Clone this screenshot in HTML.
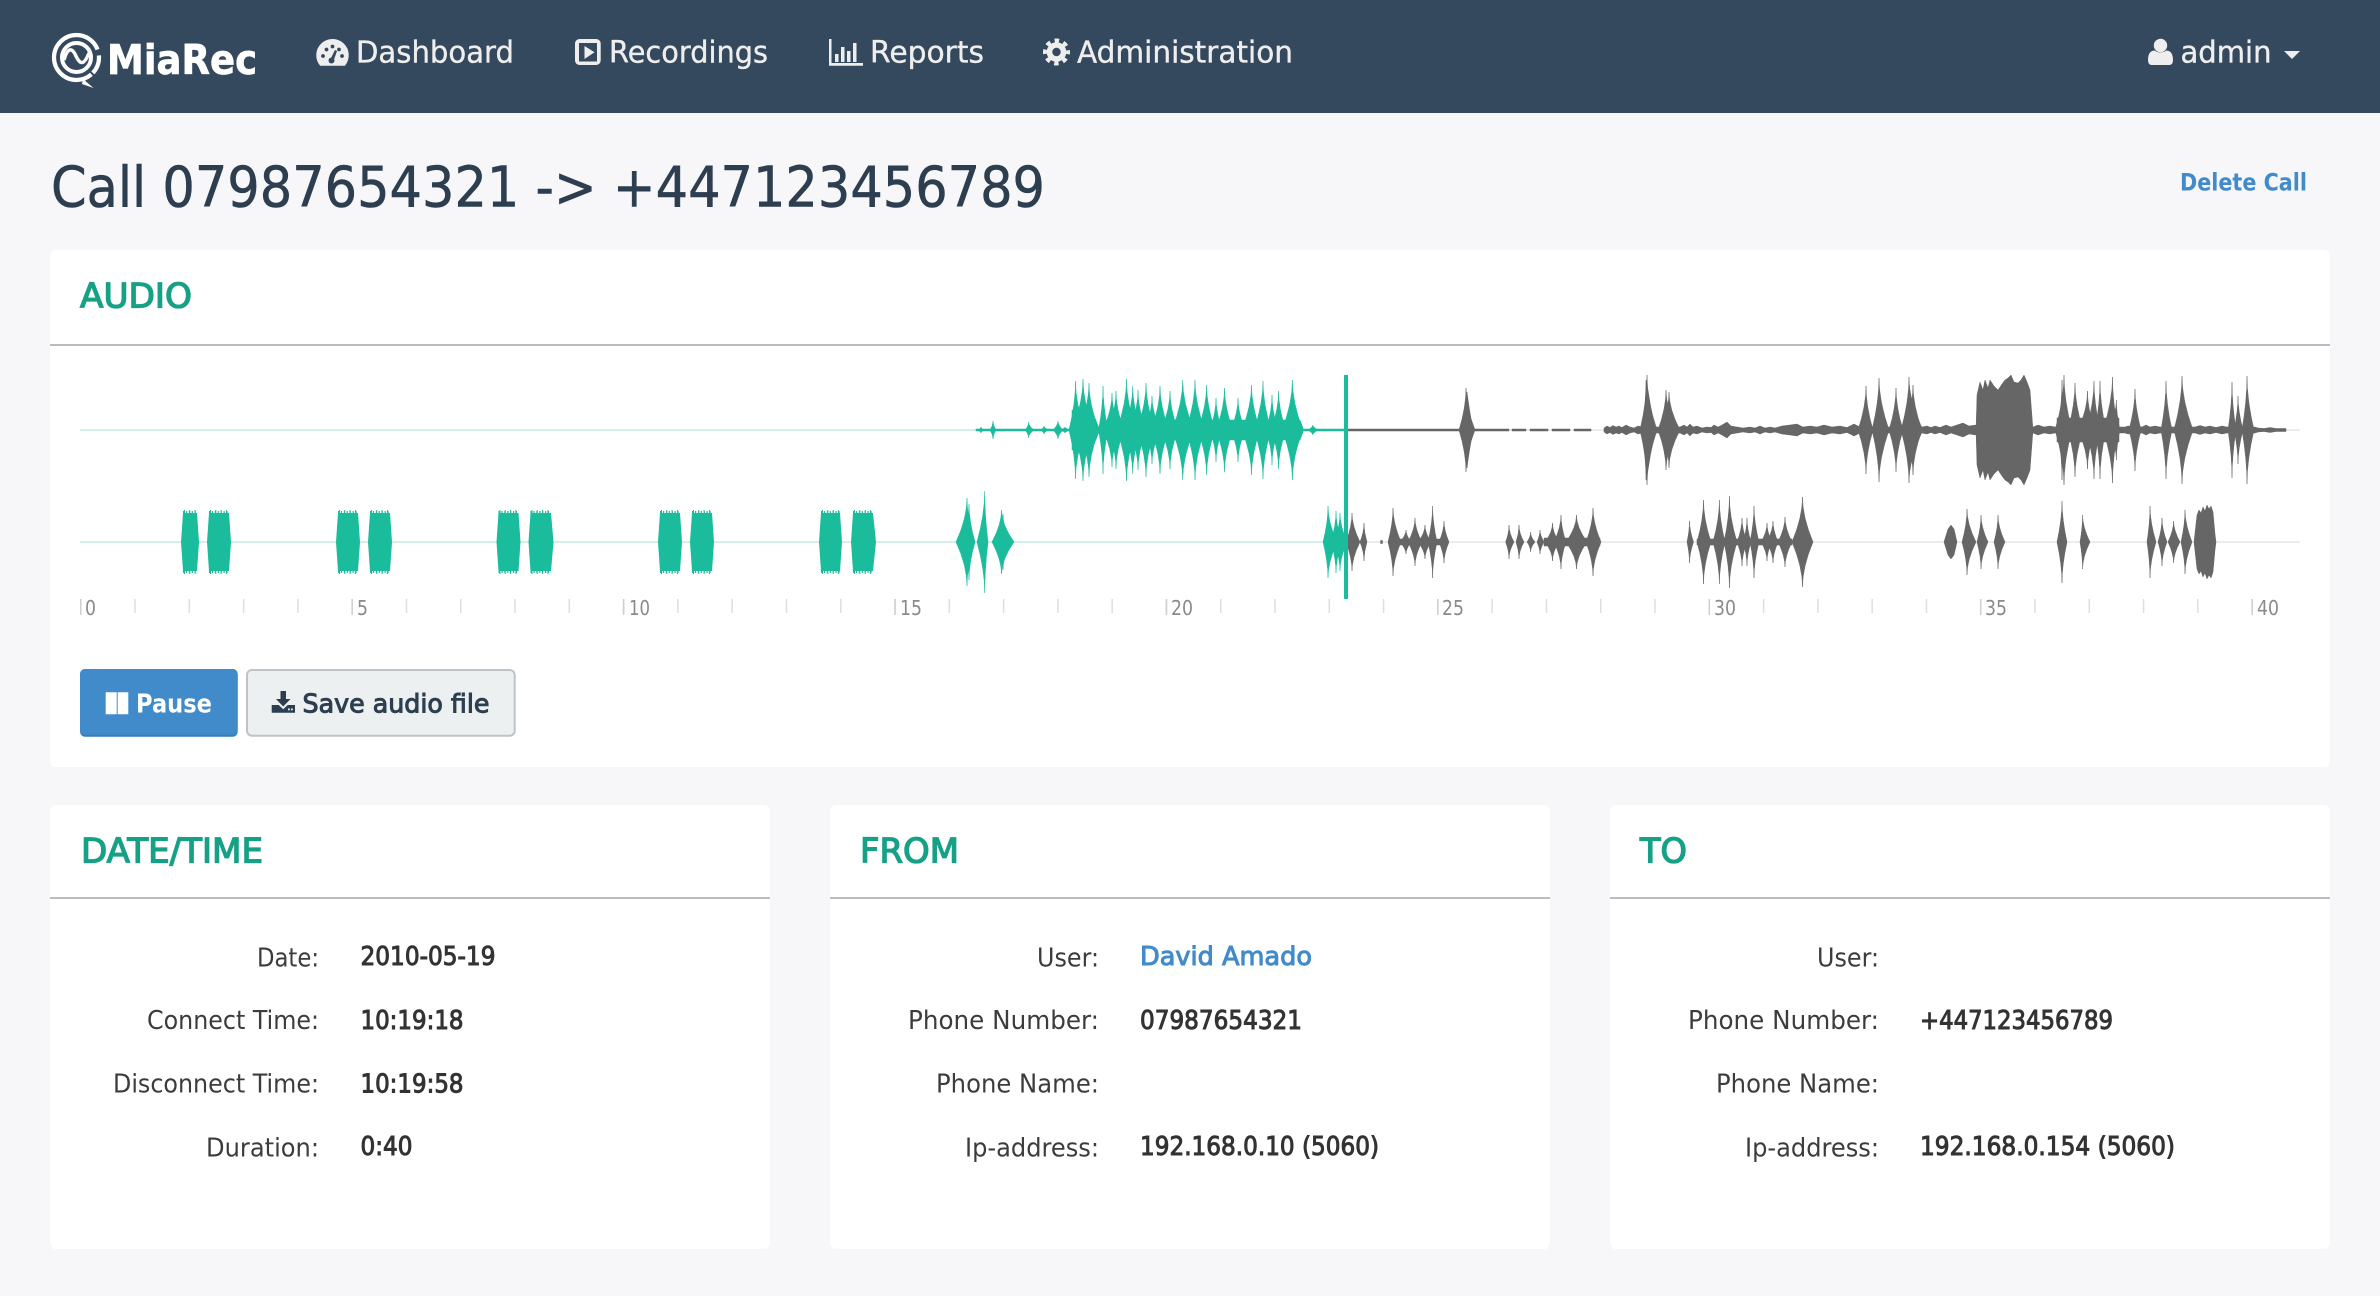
<!DOCTYPE html>
<html lang="en"><head><meta charset="utf-8"><title>Call 07987654321 -&gt; +447123456789</title>
<style>
html,body{margin:0;padding:0;background:#f7f7f9;width:2380px;height:1296px;overflow:hidden}
svg{display:block}
text{font-family:"DejaVu Sans","Liberation Sans",sans-serif}
.n{font-size:30px;fill:#eee;stroke:#eee;stroke-width:.35px}
.h{font-size:34px;fill:#16a085;stroke:#16a085;stroke-width:1.3px}
.l{font-size:25.5px;fill:#3c3c3c}
.v{font-size:25.5px;fill:#333;stroke:#333;stroke-width:1px}
.t{font-size:20px;fill:#8a8a8a}
</style></head><body>
<svg width="2380" height="1296" viewBox="0 0 2380 1296" xmlns="http://www.w3.org/2000/svg">
<defs>
<clipPath id="p"><rect x="0" y="360" width="1346" height="240"/></clipPath>
<clipPath id="q"><rect x="1346" y="360" width="1000" height="240"/></clipPath>
<path id="a" d="M976 0V-1H1509V0zM1512 0V-1H1526V0zM1530 0V-1H1548V0zM1552 0V-1H1570V0zM1574 0V-1H1591V0z
M978 0Q981 -1.600 981 -3Q981 -1.600 984 0zM990 0Q993 -5 993 -9Q993 -5 996 0zM1025 0Q1028.600 -4 1028.600 -8Q1028.600 -4 1034 0zM1040 0Q1044 -2 1044 -4Q1044 -2 1049 0zM1053 0Q1058 -5 1058 -9Q1058 -5 1063 0zM1060 0Q1065 -2 1065 -3Q1065 -2 1070 0z
M1072 0V-20L1095 -12 1099 -2 1107 -3 1112 -10 1300 -10 1303 -2V0z
M1069 0Q1075.500 -27 1075.500 -49Q1075.500 -27 1085 0zM1072 0Q1083 -28 1083 -51Q1083 -28 1094 0zM1079 0Q1089 -26 1089 -47Q1089 -26 1099 0zM1098.500 0Q1103 -24 1103 -44Q1103 -24 1108 0zM1103 0Q1112 -20 1112 -37Q1112 -20 1120 0zM1108 0Q1116 -21 1116 -39Q1116 -21 1124 0zM1117 0Q1126.500 -28 1126.500 -51Q1126.500 -28 1136 0zM1124 0Q1132.700 -24 1132.700 -44Q1132.700 -24 1141 0zM1130 0Q1138 -22 1138 -40Q1138 -22 1146 0zM1137 0Q1146 -26 1146 -47Q1146 -26 1155 0zM1145 0Q1152 -19 1152 -34Q1152 -19 1160 0zM1151 0Q1160 -24 1160 -44Q1160 -24 1169 0zM1161 0Q1170 -21 1170 -39Q1170 -21 1178 0zM1172 0Q1182.700 -27 1182.700 -50Q1182.700 -27 1194 0zM1186 0Q1195 -27 1195 -50Q1195 -27 1205 0zM1198 0Q1206.600 -25 1206.600 -45Q1206.600 -25 1215 0zM1210 0Q1216 -18 1216 -32Q1216 -18 1222 0zM1216 0Q1224.500 -23 1224.500 -42Q1224.500 -23 1233 0zM1231 0Q1238 -18 1238 -32Q1238 -18 1245 0zM1242 0Q1251.500 -25 1251.500 -45Q1251.500 -25 1260 0zM1254 0Q1263 -27 1263 -49Q1263 -27 1271 0zM1266 0Q1272 -19 1272 -35Q1272 -19 1278 0zM1271 0Q1278.600 -21 1278.600 -39Q1278.600 -21 1286 0zM1282 0Q1292.400 -27 1292.400 -50Q1292.400 -27 1303 0zM1308 0Q1312.800 -3 1312.800 -5Q1312.800 -3 1318 0z
M1459 0Q1466 -23 1466 -42Q1466 -23 1475 0zM1461 0Q1465 -22 1467 -38Q1469 -22 1473 0z
M1604 0V-2L1607 -4 1610 -2.500 1613 -4.500 1616 -3 1619 -4 1622 -2.500 1626 -5 1630 -3 1634 -2 1638 -4 1642 -3 1680 -3 1684 -5 1687 -3 1690 -6 1693 -3 1697 -4 1702 -2 1707 -3 1711 -2.500 1714 -5 1718 -3 1722 -5 1727 -8 1731 -4 1737 -3 1743 -2 1750 -3 1755 -2 1760 -4 1765 -2 1770 -3 1775 -2 1782 -4 1790 -5 1797 -6 1803 -3 1810 -4 1817 -3 1824 -5 1832 -3 1840 -4 1847 -2.500 1854 -6 1860 -3 1922 -3 1927 -4 1931 -2.500 1935 -4 1940 -2.500 1946 -5 1951 -3 1957 -5 1963 -7 1969 -4 1976 -5 2033 -3 2038 -5 2044 -3 2050 -4 2055 -3 2125 -3 2128 -4 2142 -3 2146 -5 2150 -3 2155 -4 2160 -3 2195 -3 2200 -4.500 2205 -3 2210 -4 2216 -2.500 2222 -4 2227 -3 2255 -3 2258 -2 2264 -1.500 2270 -2.500 2276 -1.500 2286 -1.500V0z
M1640 0Q1647 -30 1647 -55Q1647 -30 1657 0zM1642 0Q1646 -30 1646 -50Q1650 -30 1654 0zM1658 0Q1666 -22 1666 -40Q1666 -22 1678 0zM1660 0Q1669 -21 1669 -38Q1669 -21 1680 0z
M1858 0Q1866 -24 1866 -44Q1866 -24 1873 0zM1872 0Q1879 -29 1879 -52Q1879 -29 1889 0zM1889 0Q1896 -23 1896 -42Q1896 -23 1903 0zM1901 0Q1909 -29 1909 -53Q1909 -29 1923 0zM1904 0Q1913 -25 1913 -45Q1913 -25 1922 0z
M1976 0L1977 -35 1980 -48 1983 -40 1985 -50 1988 -42 1990 -50 1994 -44 1998 -40 2002 -46 2005 -50 2008 -52 2011 -55 2014 -48 2018 -47 2021 -50 2024 -55 2027 -48 2030 -40 2033 0z
M2057 0V-12H2119V0zM2055 0Q2064 -30 2064 -55Q2064 -30 2072 0zM2058 0Q2062 -28 2062 -50Q2062 -28 2068 0zM2068 0Q2075 -26 2075 -47Q2075 -26 2083 0zM2078 0Q2087.500 -21 2087.500 -39Q2087.500 -21 2095 0zM2086 0Q2094 -27 2094 -49Q2094 -27 2100 0zM2095 0Q2100 -27 2100 -49Q2100 -27 2106 0zM2103 0Q2112.500 -29 2112.500 -53Q2112.500 -29 2118 0zM2108 0Q2116.400 -16 2116.400 -30Q2116.400 -16 2120 0z
M2129 0Q2135 -23 2135 -41Q2135 -23 2141 0zM2161 0Q2166 -27 2166 -49Q2166 -27 2172 0zM2174 0Q2182 -30 2182 -54Q2182 -30 2193 0zM2228 0Q2232 -26 2232 -48Q2232 -26 2236 0zM2234 0Q2238 -19 2238 -34Q2238 -19 2243 0zM2242 0Q2247 -30 2247 -54Q2247 -30 2254 0z"/>
<path id="b" d="M956 0Q967 -24 967 -44Q967 -24 975 0zM961 0Q969 -21 969 -38Q969 -21 975 0zM977 0Q984.700 -28 984.700 -51Q984.700 -28 988 0zM992 0Q1001.500 -18 1001.500 -32Q1001.500 -18 1014 0zM997 0Q1003 -15 1003 -28Q1003 -15 1010 0z
M1323 0Q1328 -20 1328 -36Q1328 -20 1337 0zM1331 0Q1336 -17 1336 -31Q1336 -17 1342 0zM1334 0Q1340 -16 1340 -29Q1340 -16 1347 0zM1327 0V-5H1358V0zM1338 0Q1345 -8 1345 -14Q1345 -8 1352 0zM1346 0Q1352 -16 1352 -29Q1352 -16 1360 0zM1360 0Q1364 -10 1364 -19Q1364 -10 1367 0zM1380.500 0V-1.500H1382.500V0z
M1388 0Q1393 -19 1393 -34Q1393 -19 1401 0zM1396 0V-3H1446V0zM1400 0Q1406 -7 1406 -12Q1406 -7 1411 0zM1408 0Q1415 -13 1415 -24Q1415 -13 1422 0zM1418 0Q1425 -9 1425 -17Q1425 -9 1431 0zM1428 0Q1432.600 -20 1432.600 -36Q1432.600 -20 1437 0zM1439 0Q1444 -12 1444 -21Q1444 -12 1449 0z
M1505.600 0Q1509 -9 1509 -17Q1509 -9 1514 0zM1516 0Q1519 -9 1519 -17Q1519 -9 1524 0zM1527 0Q1530.600 -5 1530.600 -10Q1530.600 -5 1535 0zM1537 0Q1540 -7 1540 -12Q1540 -7 1544 0zM1544 0V-4H1600V0zM1545 0Q1552.500 -10 1552.500 -19Q1552.500 -10 1559 0zM1554 0Q1561 -15 1561 -27Q1561 -15 1566 0zM1566 0Q1576.500 -15 1576.500 -27Q1576.500 -15 1587 0zM1586 0Q1593 -19 1593 -34Q1593 -19 1601 0z
M1687 0Q1689.500 -12 1689.500 -21Q1689.500 -12 1693.500 0zM1697 0Q1703.500 -23 1703.500 -42Q1703.500 -23 1711 0zM1713 0Q1719.400 -23 1719.400 -42Q1719.400 -23 1725 0zM1724 0Q1729.400 -25 1729.400 -46Q1729.400 -25 1737 0zM1737 0Q1742 -13 1742 -24Q1742 -13 1747 0zM1743 0Q1747 -13 1747 -24Q1747 -13 1751 0zM1750 0Q1754 -20 1754 -36Q1754 -20 1759 0zM1761 0Q1767 -10 1767 -19Q1767 -10 1772 0zM1767 0Q1773 -12 1773 -21Q1773 -12 1778 0zM1778 0Q1785 -14 1785 -25Q1785 -14 1792 0zM1792 0Q1802.500 -25 1802.500 -45Q1802.500 -25 1813 0zM1735 0V-3H1792V0zM1697 0V-3H1737V0z
M1944 0L1948 -13 1951 -17 1954 -13 1957 0zM1962 0Q1967 -18 1967 -33Q1967 -18 1976 0zM1977 0Q1981 -15 1981 -27Q1981 -15 1988 0zM1994 0Q1998 -15 1998 -27Q1998 -15 2005 0zM2057 0Q2062 -23 2062 -41Q2062 -23 2067 0zM2080 0Q2082.600 -15 2082.600 -27Q2082.600 -15 2090 0zM2147 0Q2150 -20 2150 -36Q2150 -20 2156 0zM2158 0Q2162 -13 2162 -24Q2162 -13 2167 0zM2168 0Q2173.600 -12 2173.600 -21Q2173.600 -12 2180 0zM2181 0Q2185 -18 2185 -32Q2185 -18 2192 0z
M2194 0L2197 -27 2199 -32 2201 -29 2203 -35 2205 -31 2207 -37 2209 -33 2211 -36 2213 -30 2215 -8 2216 0z"/>
</defs>

<!-- navbar -->
<rect width="2380" height="113" fill="#35495e"/>

<!-- logo -->
<g fill="none" stroke="#fff">
<circle cx="76.500" cy="57.500" r="22.500" stroke-width="4.200" stroke-dasharray="17 2 114 6"/>
<circle cx="76.500" cy="57.500" r="14.500" stroke-width="4"/>
<path d="M64 60C67 49 71 47 75 54C79 63 83 68 89 53" stroke-width="3.400"/>
</g>
<path d="M83 79L93.500 88 82 84z" fill="#fff"/>
<text x="107" y="74" font-size="41" font-weight="bold" fill="#fff" stroke="#fff" stroke-width=".7" textLength="150" lengthAdjust="spacingAndGlyphs">MiaRec</text>

<!-- nav icons -->
<path d="M320.500 65A15.500 15.500 0 1 1 344.500 65Z" fill="#eee" stroke="#eee" stroke-width="1.500" stroke-linejoin="round"/>
<g fill="#35495e"><circle cx="323" cy="56" r="1.900"/><circle cx="326.500" cy="49.500" r="1.900"/><circle cx="332.500" cy="46.500" r="1.900"/><circle cx="339" cy="49.500" r="1.900"/><circle cx="342" cy="56" r="1.900"/><circle cx="331.500" cy="60.500" r="3"/><path d="M330 60L335 50 337 51 333.500 61z"/></g>

<rect x="575" y="39" width="25.700" height="26" rx="4.500" fill="#eee"/>
<rect x="579" y="43" width="18" height="18.500" fill="#35495e"/>
<path d="M584.500 46L594.500 52.300 584.500 59z" fill="#eee"/>

<path d="M829 39h2.500v24H863v2.700H829z" fill="#eee"/>
<path d="M835 54h3.500v8H835zM841 47h3.500v15H841zM847 51h3.500v11H847zM853 43h3.500v19H853z" fill="#eee"/>

<g fill="none" stroke="#eee"><circle cx="1056.500" cy="52" r="7" stroke-width="5.600"/><circle cx="1056.500" cy="52" r="11.500" stroke-width="4" stroke-dasharray="4.500 4.532" stroke-dashoffset="2.250"/></g>

<text class="n" x="356" y="62.700" textLength="158" lengthAdjust="spacingAndGlyphs">Dashboard</text>
<text class="n" x="609" y="62.700" textLength="159" lengthAdjust="spacingAndGlyphs">Recordings</text>
<text class="n" x="870" y="62.700" textLength="114" lengthAdjust="spacingAndGlyphs">Reports</text>
<text class="n" x="1077" y="62.700" textLength="216" lengthAdjust="spacingAndGlyphs">Administration</text>
<circle cx="2160.500" cy="45.500" r="6.700" fill="#eee"/>
<path d="M2148 60C2148 53 2151 50.500 2155 50.500C2157 53 2164 53 2166 50.500C2170 50.500 2173 53 2173 60C2173 64 2171 65 2169 65H2152C2150 65 2148 64 2148 60Z" fill="#eee"/>
<text class="n" x="2180.500" y="62.700" textLength="91" lengthAdjust="spacingAndGlyphs">admin</text>
<path d="M2284 51H2300L2292 59Z" fill="#eee"/>

<!-- title -->
<text x="51" y="206.700" font-size="56" fill="#2c3e50" stroke="#2c3e50" stroke-width=".6" textLength="994" lengthAdjust="spacingAndGlyphs">Call 07987654321 -&gt; +447123456789</text>
<text x="2180" y="190.700" font-size="24" font-weight="bold" fill="#428bca" textLength="127" lengthAdjust="spacingAndGlyphs">Delete Call</text>

<!-- audio card -->
<rect x="50" y="250" width="2280" height="517" rx="6" fill="#fff"/>
<rect x="50" y="344" width="2280" height="2" fill="#b9bdc2"/>
<text class="h" x="80" y="307.700" textLength="112" lengthAdjust="spacingAndGlyphs">AUDIO</text>

<!-- waveform base lines -->
<path d="M80 430H1346M80 542H1346" stroke="#c6e8e2" stroke-width="1.500"/>
<path d="M1346 430H2300M1346 542H2300" stroke="#e6e6e6" stroke-width="1.500"/>

<g fill="#1abc9c" stroke="#1abc9c" stroke-width=".5" stroke-linejoin="round" clip-path="url(#p)">
<use href="#a" transform="translate(0 430)"/><use href="#a" transform="matrix(1 0 0 -1 0 430)"/>
<use href="#b" transform="translate(0 542)"/><use href="#b" transform="matrix(1 0 0 -1 0 542)"/>
<path stroke="none" d="M181 542L183 513H197L199 542 197 571H183ZM207 542L209 513H229L231 542 229 571H209ZM336 542L338 513H358L360 542 358 571H338ZM368 542L370 513H390L392 542 390 571H370ZM496.500 542L498.500 513H518.500L520.500 542 518.500 571H498.500ZM528.500 542L530.500 513H551L553.500 542 551 571H530.500ZM658 542L660 513H680L682 542 680 571H660ZM690 542L692 513H712L714 542 712 571H692ZM819 542L821 513H840L842 542 840 571H821ZM851 542L853 513H873L876 542 873 571H853Z"/>
<path fill="none" stroke-width="62" stroke-dasharray="1.200 1.700" d="M183 542H197M209 542H229M338 542H358M370 542H390M498.500 542H518.500M530.500 542H551M660 542H680M692 542H712M821 542H840M853 542H873"/>
<path fill="none" stroke-width="64" stroke-dasharray="1 4.300" d="M184 542H197M210 542H229M339 542H358M371 542H390M499.500 542H518.500M531.500 542H551M661 542H680M693 542H712M822 542H840M854 542H873"/>
</g>
<g fill="#666" stroke="#666" stroke-width=".5" stroke-linejoin="round" clip-path="url(#q)">
<use href="#a" transform="translate(0 430)"/><use href="#a" transform="matrix(1 0 0 -1 0 430)"/>
<use href="#b" transform="translate(0 542)"/><use href="#b" transform="matrix(1 0 0 -1 0 542)"/>
</g>
<rect x="1344" y="375" width="4" height="224" fill="#1abc9c"/>

<!-- time axis -->
<path d="M80 606H2254" stroke="#dedede" stroke-width="14" stroke-dasharray="1.500 52.785"/>
<path d="M80 607H2254" stroke="#cfcfcf" stroke-width="16" stroke-dasharray="1.500 269.925"/>
<g>
<text class="t" x="85" y="615" textLength="11" lengthAdjust="spacingAndGlyphs">0</text>
<text class="t" x="357" y="615" textLength="11" lengthAdjust="spacingAndGlyphs">5</text>
<text class="t" x="629" y="615" textLength="21" lengthAdjust="spacingAndGlyphs">10</text>
<text class="t" x="900" y="615" textLength="22" lengthAdjust="spacingAndGlyphs">15</text>
<text class="t" x="1171" y="615" textLength="22" lengthAdjust="spacingAndGlyphs">20</text>
<text class="t" x="1442" y="615" textLength="22" lengthAdjust="spacingAndGlyphs">25</text>
<text class="t" x="1714" y="615" textLength="22" lengthAdjust="spacingAndGlyphs">30</text>
<text class="t" x="1985" y="615" textLength="22" lengthAdjust="spacingAndGlyphs">35</text>
<text class="t" x="2257" y="615" textLength="22" lengthAdjust="spacingAndGlyphs">40</text>
</g>

<!-- buttons -->
<rect x="80" y="669" width="157.700" height="67.700" rx="5" fill="#357ebd"/>
<rect x="80" y="669" width="157.700" height="65.700" rx="5" fill="#428bca"/>
<path d="M105.700 692.300h11v22h-11zM117.700 692.300h10.600v22h-10.600z" fill="#fff"/>
<text x="136" y="712.700" font-size="26" font-weight="bold" fill="#fff" textLength="76" lengthAdjust="spacingAndGlyphs">Pause</text>
<rect x="247" y="670" width="267.700" height="65.700" rx="5" fill="#ecf0f1" stroke="#bdc3c7" stroke-width="2"/>
<path d="M280.500 691h5.500v8h4.500l-7.300 7.500-7.200-7.500h4.500z" fill="#2c3e50"/>
<path d="M271.700 705h7l4.500 4.300 4.500-4.300h7.300v7.700h-23.300z" fill="#2c3e50"/>
<rect x="288" y="708.500" width="1.800" height="1.800" fill="#ecf0f1"/><rect x="291" y="708.500" width="1.800" height="1.800" fill="#ecf0f1"/>
<text x="302.500" y="712.700" font-size="26" fill="#2c3e50" stroke="#2c3e50" stroke-width="1" textLength="187" lengthAdjust="spacingAndGlyphs">Save audio file</text>

<!-- DATE/TIME -->
<rect x="50" y="805" width="720" height="444" rx="6" fill="#fff"/>
<rect x="50" y="897" width="720" height="2" fill="#b9bdc2"/>
<text class="h" x="81" y="862.700" textLength="182" lengthAdjust="spacingAndGlyphs">DATE/TIME</text>
<text class="l" x="257" y="966.700" textLength="62" lengthAdjust="spacingAndGlyphs">Date:</text>
<text class="l" x="147" y="1029" textLength="172" lengthAdjust="spacingAndGlyphs">Connect Time:</text>
<text class="l" x="113" y="1092.700" textLength="206" lengthAdjust="spacingAndGlyphs">Disconnect Time:</text>
<text class="l" x="206" y="1156.700" textLength="113" lengthAdjust="spacingAndGlyphs">Duration:</text>
<text class="v" x="360.500" y="965" textLength="135" lengthAdjust="spacingAndGlyphs">2010-05-19</text>
<text class="v" x="360.500" y="1029" textLength="103" lengthAdjust="spacingAndGlyphs">10:19:18</text>
<text class="v" x="360.500" y="1092.700" textLength="103" lengthAdjust="spacingAndGlyphs">10:19:58</text>
<text class="v" x="360.500" y="1155" textLength="52" lengthAdjust="spacingAndGlyphs">0:40</text>

<!-- FROM -->
<rect x="830" y="805" width="720" height="444" rx="6" fill="#fff"/>
<rect x="830" y="897" width="720" height="2" fill="#b9bdc2"/>
<text class="h" x="860" y="862.700" textLength="99" lengthAdjust="spacingAndGlyphs">FROM</text>
<text class="l" x="1037" y="966.700" textLength="62" lengthAdjust="spacingAndGlyphs">User:</text>
<text class="l" x="908" y="1029" textLength="191" lengthAdjust="spacingAndGlyphs">Phone Number:</text>
<text class="l" x="936" y="1092.700" textLength="163" lengthAdjust="spacingAndGlyphs">Phone Name:</text>
<text class="l" x="965" y="1156.700" textLength="134" lengthAdjust="spacingAndGlyphs">Ip-address:</text>
<text x="1140" y="965" font-size="25.500" fill="#428bca" stroke="#428bca" stroke-width="1" textLength="172" lengthAdjust="spacingAndGlyphs">David Amado</text>
<text class="v" x="1140" y="1029" textLength="162" lengthAdjust="spacingAndGlyphs">07987654321</text>
<text class="v" x="1140" y="1155" textLength="239" lengthAdjust="spacingAndGlyphs">192.168.0.10 (5060)</text>

<!-- TO -->
<rect x="1610" y="805" width="720" height="444" rx="6" fill="#fff"/>
<rect x="1610" y="897" width="720" height="2" fill="#b9bdc2"/>
<text class="h" x="1640" y="862.700" textLength="47" lengthAdjust="spacingAndGlyphs">TO</text>
<text class="l" x="1817" y="966.700" textLength="62" lengthAdjust="spacingAndGlyphs">User:</text>
<text class="l" x="1688" y="1029" textLength="191" lengthAdjust="spacingAndGlyphs">Phone Number:</text>
<text class="l" x="1716" y="1092.700" textLength="163" lengthAdjust="spacingAndGlyphs">Phone Name:</text>
<text class="l" x="1745" y="1156.700" textLength="134" lengthAdjust="spacingAndGlyphs">Ip-address:</text>
<text class="v" x="1920" y="1029" textLength="193" lengthAdjust="spacingAndGlyphs">+447123456789</text>
<text class="v" x="1920" y="1155" textLength="255" lengthAdjust="spacingAndGlyphs">192.168.0.154 (5060)</text>
</svg>
</body></html>
